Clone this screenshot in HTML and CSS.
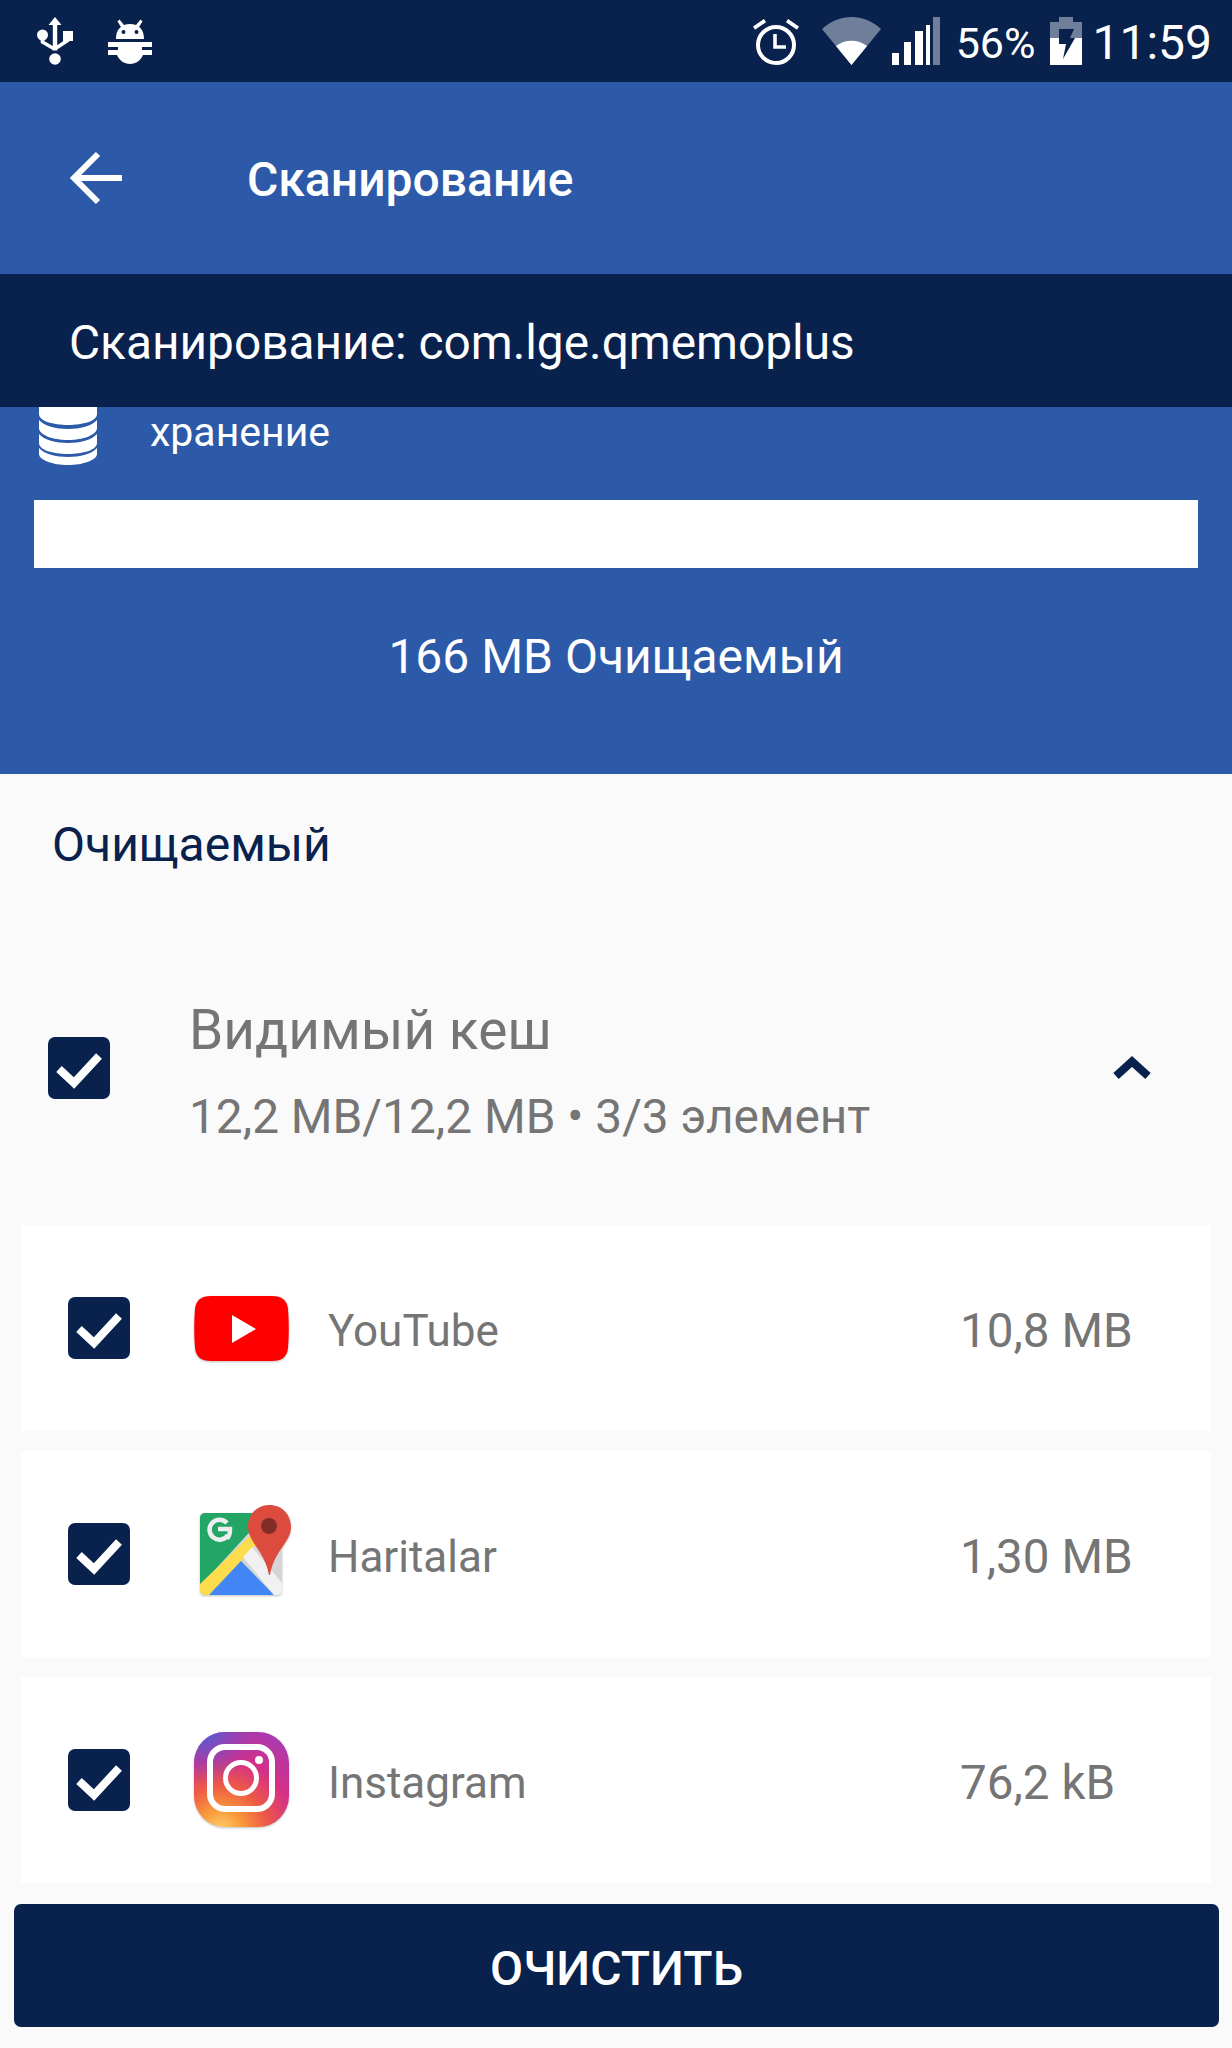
FILE: index.html
```html
<!DOCTYPE html>
<html lang="ru">
  <head>
    <meta charset="UTF-8" />
    <meta name="viewport" content="width=device-width, initial-scale=1.0" />
    <title>Сканирование</title>
    <link rel="stylesheet" href="styles.css">
  </head>
  <body>
    <div class="statusBar">
      <div class="statusLeft">
        <svg class="usbIcon" viewBox="0 0 36 48" width="36" height="48">
          <path d="M18 0l6.500 8h-4.300v25.500h-4.400V8H11.500z" fill="#fff"/>
          <circle cx="18" cy="42" r="5.800" fill="#fff"/>
          <circle cx="5.500" cy="18" r="5.500" fill="#fff"/>
          <path d="M5.500 20v5l12 7M30.500 20v3.500l-12 8" fill="none" stroke="#fff" stroke-width="3.600"/>
          <rect x="26" y="14" width="10" height="10" fill="#fff"/>
        </svg>
        <svg class="bugIcon" viewBox="0 0 44 46" width="44" height="46">
          <path d="M8 21c0-6 2-10 5-12L9.500 3.500 11.500 1.500 16 7c4-1.500 8-1.500 12 0l4.500-5.500 2 2L31 9c3 2 5 6 5 12z" fill="#fff"/>
          <circle cx="15.500" cy="14" r="2" fill="#08214d"/>
          <circle cx="28.500" cy="14" r="2" fill="#08214d"/>
          <path d="M0 24h44v5H34v3h10v5H35c-2 5-7 9-13 9S11 42 9 37H0v-5h10v-3H0z" fill="#fff"/>
        </svg>
      </div>
      <div class="statusRight">
        <svg class="alarmIcon" viewBox="0 0 48 48" width="48" height="48">
          <circle cx="24" cy="28" r="18" fill="none" stroke="#fff" stroke-width="4"/>
          <path d="M23 17v13h11" fill="none" stroke="#fff" stroke-width="3.600"/>
          <path d="M1 9.500L12 2l2 3.200-11 7.500zM47 9.500L36 2l-2 3.200 11 7.500z" fill="#fff"/>
        </svg>
        <svg class="wifiIcon" viewBox="0 0 59 48" width="59" height="48">
          <path d="M0 12C17-4 42-4 59 12L29.500 48z" fill="#6f7f99"/>
          <path d="M14 29c9-7 22-7 31 0L29.500 48z" fill="#fff"/>
        </svg>
        <svg class="signalIcon" viewBox="0 0 48 48" width="48" height="48">
          <rect x="0" y="36" width="7" height="12" fill="#fff"/>
          <rect x="12" y="25" width="7" height="23" fill="#fff"/>
          <rect x="23" y="14" width="8" height="34" fill="#fff"/>
          <rect x="34" y="8" width="4" height="40" fill="#fff"/>
          <rect x="41" y="0" width="7" height="48" fill="#6f7f99"/>
        </svg>
        <span class="battery">56%</span>
        <svg class="batteryIcon" viewBox="0 0 32 48" width="32" height="48">
          <path d="M9 0h14v5h9v18H0V5h9z" fill="#6f7f99"/>
          <rect x="0" y="21" width="32" height="27" fill="#fff"/>
          <path d="M9 12h15l-4 9h5L13 42l3-15H9z" fill="#08214d"/>
        </svg>
        <span class="clock">11:59</span>
      </div>
    </div>

    <div class="appBar">
      <svg class="backIcon" viewBox="0 0 56 56" width="56" height="56">
        <path d="M54 28H6M30 4L6 28l24 24" fill="none" stroke="#fff" stroke-width="6"/>
      </svg>
      <h1 class="title">Сканирование</h1>
    </div>

    <div class="scanBar">Сканирование: com.lge.qmemoplus</div>

    <div class="summary">
      <div class="storageRow">
        <svg class="dbIcon" viewBox="0 0 58 58" width="58" height="58">
          <path d="M0 0h58v7C58 14 44 18 29 18S0 14 0 7z" fill="#fff"/>
          <path d="M0 13c5 6 17 9 29 9s24-3 29-9v8c0 7-14 12-29 12S0 28 0 21z" fill="#fff"/>
          <path d="M0 27c5 6 17 9 29 9s24-3 29-9v9c0 7-14 11-29 11S0 43 0 36z" fill="#fff"/>
          <path d="M0 41c5 6 17 9 29 9s24-3 29-9v6c0 6-14 11-29 11S0 53 0 47z" fill="#fff"/>
        </svg>
        <span class="storageLabel">хранение</span>
      </div>
      <div class="progress"></div>
      <div class="freeable">166 MB Очищаемый</div>
    </div>

    <div class="content">
      <div class="sectionLabel">Очищаемый</div>

      <div class="group">
        <span class="check">
          <svg viewBox="0 0 62 62" width="62" height="62"><path d="M11 32l15 14 25-27" fill="none" stroke="#fff" stroke-width="8"/></svg>
        </span>
        <div class="groupText">
          <div class="groupTitle">Видимый кеш</div>
          <div class="groupSub">12,2 MB/12,2 MB • 3/3 элемент</div>
        </div>
        <svg class="chevron" viewBox="0 0 40 24" width="40" height="24">
          <path d="M4 20L20 5.500 36 20" fill="none" stroke="#08214d" stroke-width="8"/>
        </svg>
      </div>

      <div class="rows">
        <div class="row">
          <span class="check">
            <svg viewBox="0 0 62 62" width="62" height="62"><path d="M11 32l15 14 25-27" fill="none" stroke="#fff" stroke-width="8"/></svg>
          </span>
          <svg class="appIcon" viewBox="0 0 96 96" width="96" height="96">
            <path d="M18 16h61c10 0 15 4 16 13 1 12 1 27 0 39-1 9-6 13-16 13H18C8 81 3 77 2 68 1 56 1 41 2 29 3 20 8 16 18 16z" fill="#f00"/>
            <path d="M39 35l24 14-24 14z" fill="#fff"/>
          </svg>
          <span class="appName">YouTube</span>
          <span class="appSize">10,8 MB</span>
        </div>
        <div class="row">
          <span class="check">
            <svg viewBox="0 0 62 62" width="62" height="62"><path d="M11 32l15 14 25-27" fill="none" stroke="#fff" stroke-width="8"/></svg>
          </span>
          <svg class="appIcon" viewBox="0 0 96 96" width="96" height="96">
            <rect x="7" y="7" width="82" height="82" rx="5" fill="#d5d5d5"/>
            <path d="M12 7h62L7 80V12c0-3 2-5 5-5z" fill="#22a565"/>
            <path d="M57 30l7 7-46 52h-6c-3 0-5-2-5-5v-6z" fill="#fcdc4d"/>
            <path d="M16 89l32-34 33 34z" fill="#4285f4"/>
            <path d="M50 51l9-10 30 36v7c0 3-2 5-5 5h-3z" fill="#f1f1f1"/>
            <path d="M34 17a10 10 0 1 0 1 12" fill="none" stroke="#eee" stroke-width="4.500"/>
            <path d="M25 23h12c0 5-1 8-3 9" fill="none" stroke="#eee" stroke-width="4.500"/>
            <path d="M76.500 -1c12 0 21.500 9 21.500 22 0 15-17 24-21 48h-1c-4-24-21-33-21-48C55 8 64.500-1 76.500-1z" fill="#dd4b3e"/>
            <circle cx="76" cy="20" r="8" fill="#802d27"/>
          </svg>
          <span class="appName">Haritalar</span>
          <span class="appSize">1,30 MB</span>
        </div>
        <div class="row">
          <span class="check">
            <svg viewBox="0 0 62 62" width="62" height="62"><path d="M11 32l15 14 25-27" fill="none" stroke="#fff" stroke-width="8"/></svg>
          </span>
          <svg class="appIcon" viewBox="0 0 96 96" width="96" height="96">
            <defs>
              <radialGradient id="igWarm" cx="0.28" cy="1.05" r="1.15">
                <stop offset="0" stop-color="#fed373"/>
                <stop offset="0.2" stop-color="#f99b3a"/>
                <stop offset="0.42" stop-color="#ee5a45"/>
                <stop offset="0.68" stop-color="#d52f87"/>
                <stop offset="1" stop-color="#a83bb0"/>
              </radialGradient>
              <radialGradient id="igCool" cx="0.12" cy="0" r="0.55">
                <stop offset="0" stop-color="#4f5fd6"/>
                <stop offset="1" stop-color="#7a45c4" stop-opacity="0"/>
              </radialGradient>
            </defs>
            <rect x="1" y="0" width="95" height="95" rx="31" fill="url(#igWarm)"/>
            <rect x="1" y="0" width="95" height="95" rx="31" fill="url(#igCool)"/>
            <rect x="17" y="15" width="62" height="62" rx="15" fill="none" stroke="#fff" stroke-width="6"/>
            <circle cx="48" cy="46" r="15.500" fill="none" stroke="#fff" stroke-width="5"/>
            <circle cx="66" cy="28" r="4" fill="#fff"/>
          </svg>
          <span class="appName">Instagram</span>
          <span class="appSize">76,2 kB</span>
        </div>
      </div>

      <button class="cleanBtn">ОЧИСТИТЬ</button>
    </div>
  </body>
</html>
```

FILE: styles.css
```css
* {
  box-sizing: border-box;
}
html,
body {
  margin: 0;
  height: 2048px;
  overflow: hidden;
}
body {
  background: #fafafa;
  font-family: Roboto, "Noto Sans", sans-serif;
  font-size: 48px;
  color: #fff;
}
.statusBar {
  height: 82px;
  background: #08214d;
  display: flex;
  justify-content: space-between;
  align-items: center;
  padding: 0 20px 0 37px;
}
.statusLeft {
  display: flex;
  align-items: center;
  gap: 35px;
}
.statusRight {
  display: flex;
  align-items: center;
}
.alarmIcon {
  margin-right: 22px;
}
.wifiIcon {
  margin-right: 11px;
}
.signalIcon {
  margin-right: 16px;
}
.battery {
  font-size: 43px;
  margin-right: 15px;
  padding-top: 3px;
}
.batteryIcon {
  margin-right: 10px;
}
.clock {
  font-size: 48px;
  padding-top: 3px;
}
.appBar {
  height: 192px;
  background: #2c5aa8;
  display: flex;
  align-items: center;
  padding: 0 0 0 68px;
}
.backIcon {
  margin-right: 123px;
}
.title {
  margin: 3px 0 0;
  font-size: 48px;
  font-weight: 500;
}
.scanBar {
  height: 133px;
  background: #08214d;
  display: flex;
  align-items: center;
  padding: 5px 0 0 69px;
  font-size: 47.8px;
}
.summary {
  height: 367px;
  background: #2c5aa8;
  padding: 0 34px;
}
.storageRow {
  height: 93px;
  display: flex;
  align-items: flex-start;
}
.dbIcon {
  margin-left: 5px;
  margin-right: 53px;
}
.storageLabel {
  font-size: 41px;
  line-height: 50px;
}
.progress {
  height: 68px;
  background: #fff;
}
.freeable {
  text-align: center;
  margin-top: 62px;
  line-height: 54px;
}
.content {
  color: #757575;
}
.sectionLabel {
  color: #08214d;
  padding: 44px 0 0 52px;
  line-height: 54px;
}
.group {
  height: 314px;
  display: flex;
  align-items: center;
  padding: 0 80px 0 48px;
  margin-top: 39px;
}
.check {
  flex: none;
  width: 62px;
  height: 62px;
  background: #08214d;
  border-radius: 7px;
  display: block;
}
.check svg {
  display: block;
}
.groupText {
  margin-left: 79px;
  padding-top: 8px;
  flex-grow: 1;
}
.groupTitle {
  font-size: 55px;
  line-height: 60px;
}
.groupSub {
  margin-top: 30px;
  line-height: 54px;
  font-size: 47.8px;
}
.rows {
  display: flex;
  flex-direction: column;
  gap: 20px;
  padding: 0 21px;
}
.row {
  height: 206px;
  background: #fff;
  display: flex;
  align-items: center;
  padding-left: 47px;
}
.appIcon {
  flex: none;
  margin-left: 63px;
  overflow: visible;
  filter: drop-shadow(0 1px 1px rgba(0, 0, 0, 0.25));
}
.appName {
  margin-left: 39px;
  width: 632px;
  font-size: 44px;
  padding-top: 5px;
}
.appSize {
  font-size: 47.6px;
  padding-top: 5px;
}
.cleanBtn {
  display: block;
  width: 1205px;
  height: 123px;
  margin: 21px 0 0 14px;
  padding-top: 7px;
  background: #08214d;
  border: none;
  border-radius: 7px;
  color: #fff;
  font-family: Roboto, "Noto Sans", sans-serif;
  font-size: 48px;
  font-weight: 500;
}
```
